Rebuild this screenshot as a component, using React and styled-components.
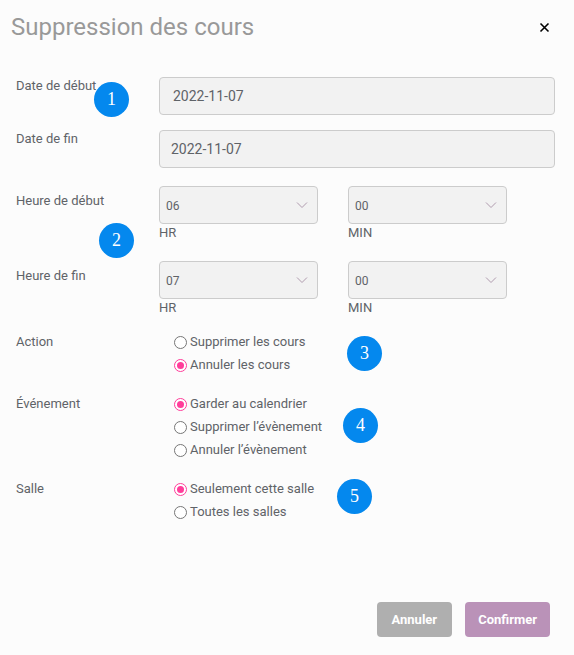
import { useState } from "react";
import styled, { createGlobalStyle } from "styled-components";

const GlobalStyle = createGlobalStyle`
  *,
  *::before,
  *::after {
    box-sizing: border-box;
  }

  body {
    margin: 0;
    background-color: #fcfcfc;
    color: #5f6368;
    font-family: Roboto, "Liberation Sans", sans-serif;
    font-size: 13px;
    line-height: 18px;
  }
`;

const Modal = styled.form`
  display: flex;
  flex-direction: column;
  min-height: 100vh;
  padding-bottom: 18px;
`;

const Header = styled.header`
  display: flex;
  align-items: center;
  justify-content: space-between;
  padding: 12px 20px 0 11px;
`;

const Title = styled.h1`
  margin: 0;
  color: #999;
  font-size: 24px;
  font-weight: 400;
  line-height: 30px;
`;

const CloseButton = styled.button`
  display: flex;
  padding: 4px;
  border: 0;
  background: none;
  color: #000;
  cursor: pointer;
`;

const Body = styled.div`
  display: flex;
  flex-direction: column;
  padding: 35px 19px 0 16px;
`;

const Row = styled.div`
  position: relative;
  display: grid;
  grid-template-columns: 143px 1fr;
  align-items: start;
  margin-bottom: ${({ $space }) => $space}px;
`;

const Label = styled.label`
  padding-top: ${({ $drop }) => ($drop ? 6 : 0)}px;
`;

const Badge = styled.span`
  position: absolute;
  top: ${({ $top }) => $top}px;
  left: ${({ $left }) => $left}px;
  width: 35px;
  height: 35px;
  border-radius: 50%;
  background-color: #0488ee;
  color: #fff;
  font-family: "Liberation Serif", serif;
  font-size: 18px;
  line-height: 35px;
  text-align: center;
`;

const DateInput = styled.input`
  width: 100%;
  height: 38px;
  padding: 0 ${({ $inset }) => $inset}px;
  border: 1px solid #ccc;
  border-radius: 4px;
  background-color: #f2f2f2;
  color: #5f6368;
  font: inherit;
  font-size: 14px;
`;

const TimeFields = styled.div`
  display: grid;
  grid-template-columns: 1fr 1fr;
  column-gap: 30px;
  padding-right: 48px;
`;

const TimeField = styled.label`
  display: flex;
  flex-direction: column;
`;

const SelectBox = styled.span`
  display: grid;
  align-items: center;

  > * {
    grid-area: 1 / 1;
  }

  svg {
    justify-self: end;
    margin-right: 10px;
    pointer-events: none;
  }
`;

const Select = styled.select`
  appearance: none;
  width: 100%;
  height: 38px;
  padding: 2px 6px 0;
  border: 1px solid #ccc;
  border-radius: 4px;
  background-color: #f2f2f2;
  color: #5f6368;
  font: inherit;
  font-size: 12px;
`;

const Options = styled.div`
  display: flex;
  flex-direction: column;
  align-items: flex-start;
  gap: 5px;
  padding-left: 15px;
`;

const Option = styled.label`
  display: flex;
  align-items: center;
  gap: 3px;
`;

const Radio = styled.input`
  appearance: none;
  display: grid;
  place-items: center;
  width: 13px;
  height: 13px;
  margin: 1px 0 0;
  border: 1px solid #767676;
  border-radius: 50%;
  background-color: #fff;

  &:checked {
    border-color: #ff3d9a;
  }

  &:checked::before {
    content: "";
    width: 7px;
    height: 7px;
    border-radius: 50%;
    background-color: #ff3d9a;
  }
`;

const Footer = styled.footer`
  display: flex;
  justify-content: flex-end;
  gap: 13px;
  margin-top: auto;
  padding: 18px 24px 0;
`;

const Button = styled.button`
  height: 35px;
  padding: 0 ${({ $primary }) => ($primary ? 13 : 15)}px;
  border: 0;
  border-radius: 4px;
  background-color: ${({ $primary }) => ($primary ? "#ba92b8" : "#afafaf")};
  color: #fff;
  font: inherit;
  font-weight: 700;
  cursor: pointer;
`;

const hours = Array.from({ length: 24 }, (_, i) => String(i).padStart(2, "0"));
const minutes = Array.from({ length: 12 }, (_, i) =>
  String(i * 5).padStart(2, "0")
);

function TimeSelect({ id, unit, values, initial }) {
  return (
    <TimeField>
      <SelectBox>
        <Select id={id} defaultValue={initial}>
          {values.map((value) => (
            <option key={value}>{value}</option>
          ))}
        </Select>
        <svg width="12" height="8" viewBox="0 0 12 8" aria-hidden="true">
          <path d="M1 1.5 6 6.5 11 1.5" fill="none" stroke="#b09bae" />
        </svg>
      </SelectBox>
      {unit}
    </TimeField>
  );
}

function RadioOptions({ name, options, initial }) {
  const [selected, setSelected] = useState(initial);

  return (
    <Options role="radiogroup" aria-labelledby={`${name}-label`}>
      {options.map((option) => (
        <Option key={option}>
          <Radio
            type="radio"
            name={name}
            checked={selected === option}
            onChange={() => setSelected(option)}
          />
          {option}
        </Option>
      ))}
    </Options>
  );
}

function App() {
  return (
    <>
      <GlobalStyle />
      <Modal onSubmit={(e) => e.preventDefault()}>
        <Header>
          <Title>Suppression des cours</Title>
          <CloseButton type="button" aria-label="Fermer">
            <svg width="11" height="11" viewBox="0 0 11 11">
              <path
                d="M1.5 1.5 9.5 9.5M9.5 1.5 1.5 9.5"
                stroke="currentColor"
                strokeWidth="1.6"
              />
            </svg>
          </CloseButton>
        </Header>

        <Body>
          <Row $space={15}>
            <Label htmlFor="start-date">Date de début</Label>
            <DateInput id="start-date" defaultValue="2022-11-07" $inset={13} />
            <Badge $top={5} $left={78}>1</Badge>
          </Row>
          <Row $space={18}>
            <Label htmlFor="end-date">Date de fin</Label>
            <DateInput id="end-date" defaultValue="2022-11-07" $inset={11} />
          </Row>
          <Row $space={19}>
            <Label htmlFor="start-hour" $drop>Heure de début</Label>
            <TimeFields>
              <TimeSelect id="start-hour" unit="HR" values={hours} initial="06" />
              <TimeSelect id="start-min" unit="MIN" values={minutes} initial="00" />
            </TimeFields>
            <Badge $top={37} $left={83}>2</Badge>
          </Row>
          <Row $space={16}>
            <Label htmlFor="end-hour" $drop>Heure de fin</Label>
            <TimeFields>
              <TimeSelect id="end-hour" unit="HR" values={hours} initial="07" />
              <TimeSelect id="end-min" unit="MIN" values={minutes} initial="00" />
            </TimeFields>
          </Row>
          <Row $space={21}>
            <Label as="span" id="action-label">Action</Label>
            <RadioOptions
              name="action"
              options={["Supprimer les cours", "Annuler les cours"]}
              initial="Annuler les cours"
            />
            <Badge $top={3} $left={331}>3</Badge>
          </Row>
          <Row $space={21}>
            <Label as="span" id="event-label">Événement</Label>
            <RadioOptions
              name="event"
              options={[
                "Garder au calendrier",
                "Supprimer l’évènement",
                "Annuler l’évènement",
              ]}
              initial="Garder au calendrier"
            />
            <Badge $top={13} $left={327}>4</Badge>
          </Row>
          <Row $space={0}>
            <Label as="span" id="room-label">Salle</Label>
            <RadioOptions
              name="room"
              options={["Seulement cette salle", "Toutes les salles"]}
              initial="Seulement cette salle"
            />
            <Badge $top={-1} $left={321}>5</Badge>
          </Row>
        </Body>

        <Footer>
          <Button type="button">Annuler</Button>
          <Button type="submit" $primary>Confirmer</Button>
        </Footer>
      </Modal>
    </>
  );
}

export default App;
